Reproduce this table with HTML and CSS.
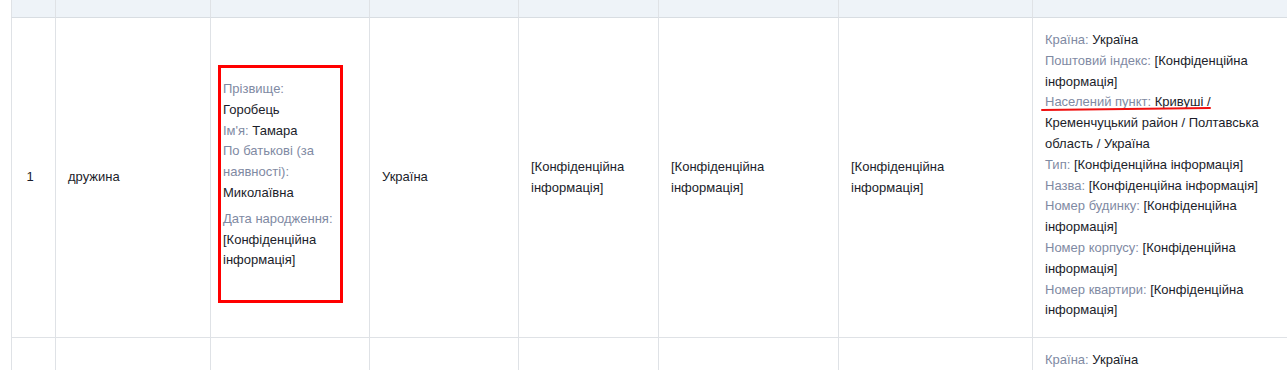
FILE: index.html
```html
<!DOCTYPE html>
<html lang="uk">
<head>
<meta charset="utf-8">
<title>Члени сім'ї</title>
<link rel="stylesheet" href="styles.css">
</head>
<body>
<div class="table">
  <div class="cell head"></div>
  <div class="cell head"></div>
  <div class="cell head"></div>
  <div class="cell head"></div>
  <div class="cell head"></div>
  <div class="cell head"></div>
  <div class="cell head"></div>
  <div class="cell head"></div>

  <div class="cell num">1</div>
  <div class="cell">дружина</div>
  <div class="cell">
    <div class="person">
      <div><span class="lbl">Прізвище:</span><br>Горобець</div>
      <div><span class="lbl">Ім'я:</span> Тамара</div>
      <div><span class="lbl">По батькові (за наявності):</span><br>Миколаївна</div>
      <div class="dob"><span class="lbl">Дата народження:</span><br>[Конфіденційна інформація]</div>
    </div>
  </div>
  <div class="cell">Україна</div>
  <div class="cell">[Конфіденційна інформація]</div>
  <div class="cell">[Конфіденційна інформація]</div>
  <div class="cell">[Конфіденційна інформація]</div>
  <div class="cell addr">
    <div><span class="lbl">Країна:</span> Україна</div>
    <div><span class="lbl">Поштовий індекс:</span> [Конфіденційна інформація]</div>
    <div class="marked"><span class="lbl">Населений пункт:</span> Кривуші / Кременчуцький район / Полтавська область / Україна</div>
    <div><span class="lbl">Тип:</span> [Конфіденційна інформація]</div>
    <div><span class="lbl">Назва:</span> [Конфіденційна інформація]</div>
    <div><span class="lbl">Номер будинку:</span> [Конфіденційна інформація]</div>
    <div><span class="lbl">Номер корпусу:</span> [Конфіденційна інформація]</div>
    <div><span class="lbl">Номер квартири:</span> [Конфіденційна інформація]</div>
  </div>

  <div class="cell num"></div>
  <div class="cell"></div>
  <div class="cell"></div>
  <div class="cell"></div>
  <div class="cell"></div>
  <div class="cell"></div>
  <div class="cell"></div>
  <div class="cell addr">
    <div><span class="lbl">Країна:</span> Україна</div>
    <div><span class="lbl">Поштовий індекс:</span> [Конфіденційна інформація]</div>
    <div><span class="lbl">Населений пункт:</span> [Конфіденційна інформація]</div>
  </div>
</div>
</body>
</html>
```

FILE: styles.css
```css
html, body {
  margin: 0;
  padding: 0;
  overflow: hidden;
  background: #ffffff;
}

body {
  font-family: "Liberation Sans", Arial, sans-serif;
  font-size: 13px;
  line-height: 1.6;
  color: #1b1d2a;
}

.table {
  margin-left: 11px;
  display: grid;
  grid-template-columns: 44px 155px 159px 149px 140px 180px 194px 1fr;
}

.cell {
  border-left: 1px solid #dfe2e6;
  border-bottom: 1px solid #dfe2e6;
  padding: 0 12px;
  display: flex;
  flex-direction: column;
  justify-content: center;
  min-width: 0;
}

.head {
  height: 17px;
  background: #eef3f8;
  border-bottom-color: #d8dde2;
}

.num {
  text-align: center;
  padding: 0 7px 0 0;
}

.addr {
  justify-content: flex-start;
  padding: 12px 12px 16px;
}

.lbl {
  color: #7f8aa3;
}

.person {
  position: relative;
  padding-bottom: 5px;
}

.person::before {
  content: "";
  position: absolute;
  left: -5px;
  top: -14px;
  right: 14px;
  bottom: -27px;
  border: 3px solid #ff0000;
}

.dob {
  margin-top: 5px;
}

.marked {
  position: relative;
}

.marked::after {
  content: "";
  position: absolute;
  left: -4px;
  top: 16px;
  width: 170px;
  height: 2px;
  border-radius: 1px;
  background: #f01010;
  transform: rotate(-0.6deg);
}
```
